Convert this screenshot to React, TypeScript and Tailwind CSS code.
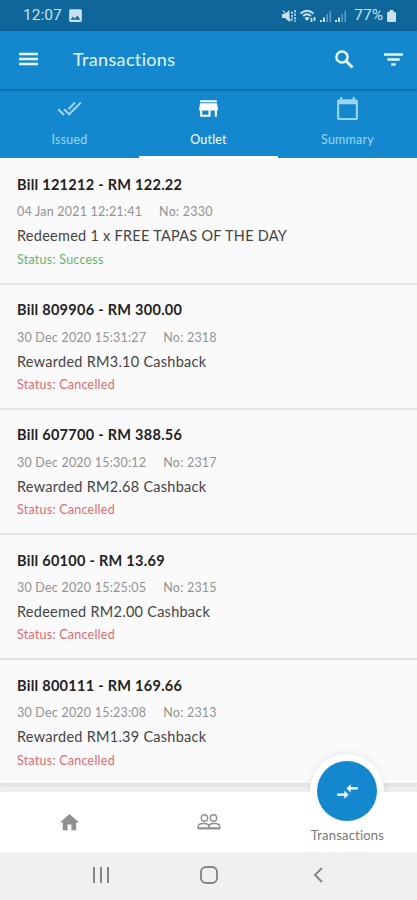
import React from 'react';
import { MdDoneAll, MdStore, MdCalendarToday, MdHome, MdCompareArrows, MdImage } from 'react-icons/md';

interface Transaction {
  bill: string;
  date: string;
  no: string;
  description: string;
  status: 'Success' | 'Cancelled';
}

const transactions: Transaction[] = [
  { bill: 'Bill 121212 - RM 122.22', date: '04 Jan 2021 12:21:41', no: '2330', description: 'Redeemed 1 x FREE TAPAS OF THE DAY', status: 'Success' },
  { bill: 'Bill 809906 - RM 300.00', date: '30 Dec 2020 15:31:27', no: '2318', description: 'Rewarded RM3.10 Cashback', status: 'Cancelled' },
  { bill: 'Bill 607700 - RM 388.56', date: '30 Dec 2020 15:30:12', no: '2317', description: 'Rewarded RM2.68 Cashback', status: 'Cancelled' },
  { bill: 'Bill 60100 - RM 13.69', date: '30 Dec 2020 15:25:05', no: '2315', description: 'Redeemed RM2.00 Cashback', status: 'Cancelled' },
  { bill: 'Bill 800111 - RM 169.66', date: '30 Dec 2020 15:23:08', no: '2313', description: 'Rewarded RM1.39 Cashback', status: 'Cancelled' },
];

const SignalIcon = () => (
  <svg width="12" height="12" viewBox="0 0 12 12" fill="currentColor">
    <path d="M0 10h2v2H0zM3 7.500h2v4.500H3z" />
    <path d="M6.500 4H8v8H6.500zM9.500 1H11v11H9.500z" opacity=".45" />
  </svg>
);

const PeopleIcon = () => (
  <svg width="24" height="18" viewBox="0 0 24 18" fill="none" stroke="currentColor" strokeWidth="1.400">
    <circle cx="7.500" cy="5" r="3.200" />
    <circle cx="16.500" cy="5" r="3.200" />
    <path d="M1.200 15.500v-1.800q0-3.200 4.800-3.200h1.500q4.500 0 4.500 3.200v1.800zM12 13.700q0-3.200 4.500-3.200H18q4.800 0 4.800 3.200v1.800H12" />
    <path d="M1 15.300h22" strokeWidth="2" />
  </svg>
);

const StatusBar = () => (
  <div className="flex h-[31px] shrink-0 items-center bg-[#0e669b] pl-[23px] pr-[21px] font-['Roboto',sans-serif] text-[#c8e2ef]">
    <span className="text-[15.5px] leading-none">12:07</span>
    <MdImage size={17} className="ml-[5px]" />
    <div className="ml-auto flex items-center">
      <svg width="14" height="14" viewBox="0 0 14 14" fill="currentColor" stroke="currentColor">
        <path d="M0 5h3l4.500-4v12L3 9H0z" stroke="none" />
        <path d="M1 1.500l8 10.500" strokeWidth="1.200" />
        <path d="M10 2.500v9M13 1v12" strokeWidth="1.500" strokeDasharray="2.500 1" />
      </svg>
      <svg className="ml-[4px]" width="16" height="14" viewBox="0 0 16 14" fill="none" stroke="currentColor" strokeWidth="1.700">
        <path d="M.5 4.500q6.500-5.500 13 0M3 7q4-3.500 8 0" />
        <path d="M4.500 9q2.500-2 5 0L7 12z" fill="currentColor" stroke="none" />
        <path d="M11.500 9v4M14.500 8v4" />
      </svg>
      <span className="ml-[4px]"><SignalIcon /></span>
      <span className="ml-[3px]"><SignalIcon /></span>
      <span className="ml-[7px] text-[15.5px] leading-none">77%</span>
      <svg className="ml-[4px]" width="9" height="12" viewBox="0 0 9 12" fill="currentColor">
        <path d="M2.500 0h4v2H8q1 0 1 1v8q0 1-1 1H1q-1 0-1-1V3q0-1 1-1h1.500z" />
      </svg>
    </div>
  </div>
);

const TransactionRow = ({ item }: { item: Transaction }) => (
  <div className="h-[125.2px] shrink-0 border-b-2 border-[#e5e5e5] bg-[#fafafa] pl-[17px] pt-[15.6px] shadow-[0_1px_2px_rgba(0,0,0,0.05)]">
    <div className="h-[26px] whitespace-nowrap text-[14.5px] font-bold leading-[20px] tracking-[0.28px] text-[#222]">{item.bill}</div>
    <div className="flex h-[23px] items-center gap-[17px] whitespace-nowrap text-[12.5px] leading-none tracking-[0.22px] text-[#929292]">
      <span>{item.date}</span>
      <span>No: {item.no}</span>
    </div>
    <div className="flex h-[25px] items-center whitespace-nowrap text-[14.5px] leading-none tracking-[0.26px] text-[#444]">{item.description}</div>
    <div className={`flex h-[22px] items-center text-[12.5px] leading-none tracking-[0.24px] ${item.status === 'Success' ? 'text-[#66b36d]' : 'text-[#df6b70]'}`}>
      Status: {item.status}
    </div>
  </div>
);

export default function App() {
  return (
    <div className="flex h-[900px] w-[417px] flex-col overflow-hidden bg-[#fafafa] font-['Lato',sans-serif]">
      <StatusBar />

      <header className="relative flex h-[58px] shrink-0 items-center bg-[#1488cf] pb-[2px] pl-[19px] pr-[14px] text-[#e6f7fc] shadow-[0_1px_3px_rgba(0,50,90,0.5)]">
        <svg width="20" height="14" viewBox="0 0 20 14" stroke="currentColor" strokeWidth="2.300">
          <path d="M0 2h19M0 7h19M0 12h19" />
        </svg>
        <h1 className="ml-[34px] text-[18px] tracking-[0.35px]">Transactions</h1>
        <svg className="ml-auto" width="19" height="19" viewBox="0 0 19 19" fill="none" stroke="currentColor" strokeWidth="2.500">
          <circle cx="7" cy="7" r="5.600" />
          <path d="M11 11l6.500 6.500" strokeWidth="2.800" />
        </svg>
        <svg className="ml-[30px]" width="19" height="13" viewBox="0 0 19 13" stroke="currentColor" strokeWidth="2.300">
          <path d="M0 1.500h19M3.300 6.500h12.400M7.300 11.500h4.400" />
        </svg>
      </header>

      <nav className="grid h-[69px] shrink-0 grid-cols-3 bg-[#1488cf] text-[12.5px] tracking-[0.2px] text-[#9bd5f3]">
        <div className="flex flex-col items-center pt-[7px]">
          <MdDoneAll size={25} />
          <span className="mt-[10px] leading-[18px]">Issued</span>
        </div>
        <div className="flex flex-col items-center border-b-2 border-white pt-[7px] text-white">
          <MdStore size={25} />
          <span className="mt-[10px] leading-[18px]">Outlet</span>
        </div>
        <div className="flex flex-col items-center pt-[7px]">
          <MdCalendarToday size={25} />
          <span className="mt-[10px] leading-[18px]">Summary</span>
        </div>
      </nav>

      <main className="flex h-[634px] shrink-0 flex-col overflow-hidden bg-[#ececec]">
        <div className="h-[1.5px] shrink-0 bg-[#fafafa]" />
        {transactions.map((item) => (
          <TransactionRow key={item.no} item={item} />
        ))}
      </main>

      <nav className="relative grid h-[60px] shrink-0 grid-cols-3 bg-white text-[#8f8f8f]">
        <div className="flex items-center justify-center"><MdHome size={23} /></div>
        <div className="flex items-center justify-center"><PeopleIcon /></div>
        <div className="flex items-end justify-center pb-[8px] text-[13px] leading-[17px] tracking-[0.2px] text-[#777]">Transactions</div>
        <div className="absolute left-[310px] top-[-38px] h-[74px] w-[74px] rounded-full bg-white shadow-[0_-2px_6px_rgba(0,0,0,0.07)] [clip-path:inset(-10px_-10px_36px_-10px)]" />
        <div className="absolute left-[317px] top-[-31px] flex h-[60px] w-[60px] items-center justify-center rounded-full bg-[#1488cf] text-white">
          <MdCompareArrows size={25} />
        </div>
      </nav>

      <div className="flex h-[48px] shrink-0 items-center bg-[#f0f0f0] pb-[3px] pl-[92px] text-[#858585]">
        <svg width="18" height="18" viewBox="0 0 18 18" fill="none" stroke="currentColor" strokeWidth="2">
          <path d="M2 1v16M9 1v16M16 1v16" />
        </svg>
        <svg className="ml-[90px]" width="18" height="18" viewBox="0 0 18 18" fill="none" stroke="currentColor" strokeWidth="1.900">
          <rect x="1" y="1" width="16" height="16" rx="5" />
        </svg>
        <svg className="ml-[95px]" width="10" height="16" viewBox="0 0 10 16" fill="none" stroke="currentColor" strokeWidth="1.900">
          <path d="M9 1L2 8l7 7" />
        </svg>
      </div>
    </div>
  );
}
